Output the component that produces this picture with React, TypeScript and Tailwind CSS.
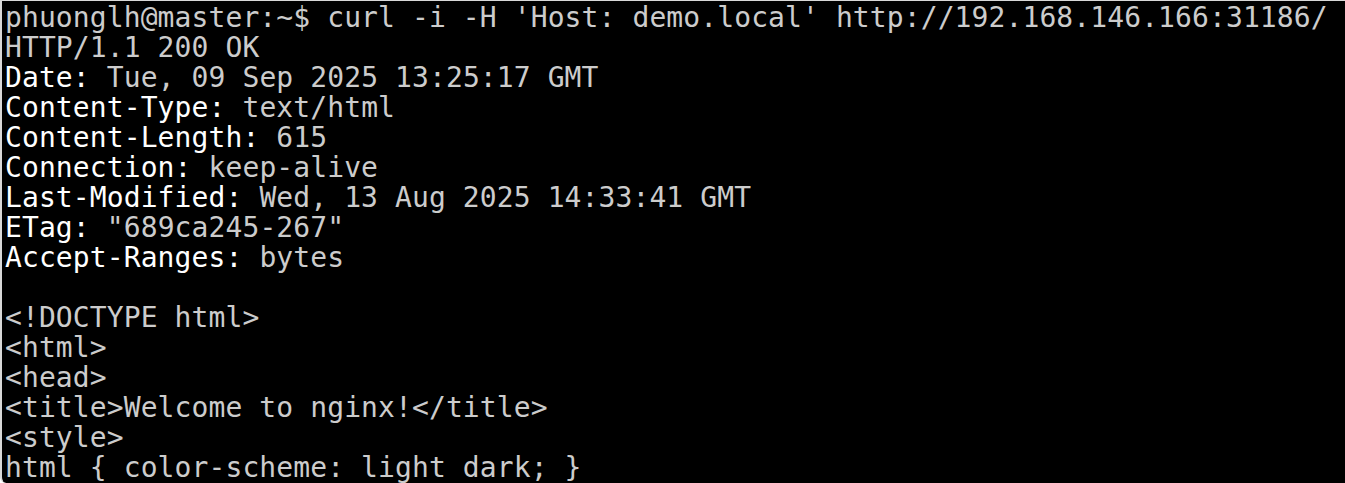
import React from "react";

type Line = { key?: string; val: string };

const lines: Line[] = [
  { val: "phuonglh@master:~$ curl -i -H 'Host: demo.local' http://192.168.146.166:31186/" },
  { val: "HTTP/1.1 200 OK" },
  { key: "Date", val: " Tue, 09 Sep 2025 13:25:17 GMT" },
  { key: "Content-Type", val: " text/html" },
  { key: "Content-Length", val: " 615" },
  { key: "Connection", val: " keep-alive" },
  { key: "Last-Modified", val: " Wed, 13 Aug 2025 14:33:41 GMT" },
  { key: "ETag", val: ' "689ca245-267"' },
  { key: "Accept-Ranges", val: " bytes" },
  { val: "" },
  { val: "<!DOCTYPE html>" },
  { val: "<html>" },
  { val: "<head>" },
  { val: "<title>Welcome to nginx!</title>" },
  { val: "<style>" },
  { val: "html { color-scheme: light dark; }" },
];

export default function App() {
  return (
    <div className="w-[1345px] h-[483px] bg-black overflow-hidden border-l-2 border-t border-[#d8d8d8] rounded-bl-[6px]">
      <div
        className="pt-[2px] pl-[3px] text-[28px] leading-[30px] tracking-[0.1px] whitespace-pre text-[#cccccc]"
        style={{ fontFamily: '"DejaVu Sans Mono", "Liberation Mono", monospace' }}
      >
        {lines.map((l, i) => (
          <div key={i} className="h-[30px]">
            {l.key ? (
              <>
                <span className="text-white">{l.key}:</span>
                <span>{l.val}</span>
              </>
            ) : (
              <span>{l.val}</span>
            )}
          </div>
        ))}
      </div>
    </div>
  );
}
